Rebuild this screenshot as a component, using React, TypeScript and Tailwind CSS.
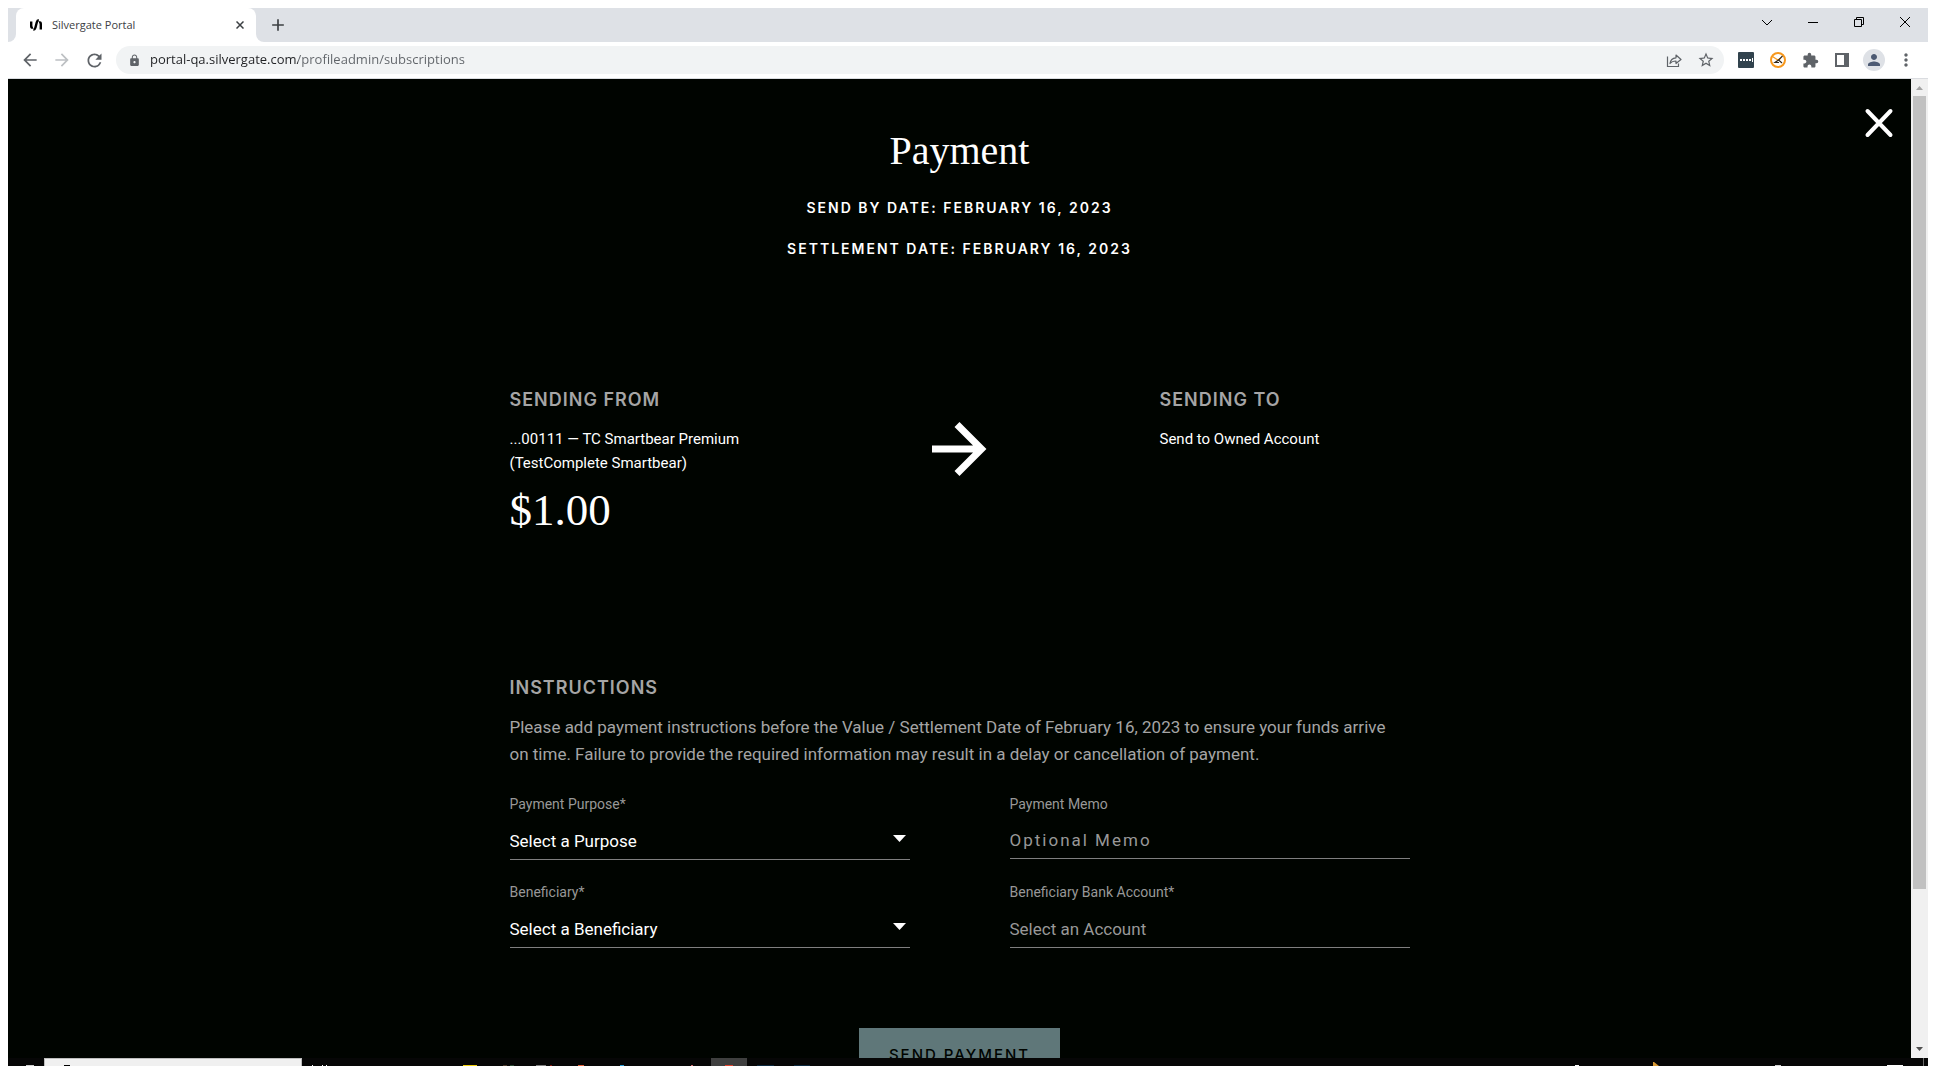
import type { ReactNode } from "react";
import {
  MdArrowBack,
  MdArrowForward,
  MdAdd,
  MdExtension,
  MdLock,
  MdMoreVert,
  MdPerson,
  MdRefresh,
  MdStarBorder,
} from "react-icons/md";

function TabStrip() {
  return (
    <div className="flex h-[34px] bg-[#dee1e6] pl-2 text-[#3c4043]">
      <div className="relative flex w-60 items-center rounded-t-lg bg-white pl-3.5 pr-2">
        <span className="absolute -left-2 bottom-0 size-2 overflow-hidden bg-white">
          <span className="block size-2 rounded-br-lg bg-[#dee1e6]" />
        </span>
        <span className="absolute -right-2 bottom-0 size-2 overflow-hidden bg-white">
          <span className="block size-2 rounded-bl-lg bg-[#dee1e6]" />
        </span>
        <svg className="size-3" viewBox="0 0 12 12" fill="none" stroke="#000" strokeWidth="2.4">
          <path d="M1.2 2.500v4.700q0 1.800 1.800 1.400M10.800 10.500V4.800q0-1.800-1.800-1.400" />
          <path d="M3.400 10.700q1.500 0 2-1.900L6.800 3.200q.5-1.900 2-1.900" />
        </svg>
        <span className="ml-2.5 flex-1 text-[11px]">Silvergate Portal</span>
        <button aria-label="Close tab" className="flex size-4 items-center justify-center">
          <svg className="size-2" viewBox="0 0 8 8" stroke="#3c4043" strokeWidth="1.500">
            <path d="M.5.5l7 7M7.500.5l-7 7" />
          </svg>
        </button>
      </div>
      <button aria-label="New tab" className="ml-3 self-center">
        <MdAdd size={20} />
      </button>
      <div className="ml-auto flex h-7 items-center text-black">
        <WindowButton label="Search tabs">
          <path d="M1 4l5 5 5-5" />
        </WindowButton>
        <WindowButton label="Minimize">
          <path d="M1 6.500h10" />
        </WindowButton>
        <WindowButton label="Restore">
          <path d="M1.500 3.500h7v7h-7zM3.500 3.500v-2h7v7h-2" />
        </WindowButton>
        <WindowButton label="Close window">
          <path d="M1 1l10 10M11 1L1 11" />
        </WindowButton>
      </div>
    </div>
  );
}

function WindowButton({ label, children }: { label: string; children: ReactNode }) {
  return (
    <button aria-label={label} className="flex h-7 w-[46px] items-center justify-center">
      <svg className="size-3" viewBox="0 0 12 12" fill="none" stroke="currentColor">
        {children}
      </svg>
    </button>
  );
}

function ToolButton({ label, children }: { label: string; children: ReactNode }) {
  return (
    <button aria-label={label} className="flex h-7 w-8 items-center justify-center">
      {children}
    </button>
  );
}

function Toolbar() {
  return (
    <div className="flex h-[37px] items-center border-b border-[#dadce0] bg-white pl-1.5 pr-1.5 text-[#5f6368]">
      <ToolButton label="Back">
        <MdArrowBack size={20} />
      </ToolButton>
      <ToolButton label="Forward">
        <MdArrowForward size={20} className="text-[#bdc0c3]" />
      </ToolButton>
      <ToolButton label="Reload">
        <MdRefresh size={21} />
      </ToolButton>
      <div className="ml-1.5 mr-1.5 flex h-7 flex-1 items-center rounded-full bg-[#f1f3f4] pl-3 pr-0.5">
        <MdLock size={13} />
        <input
          aria-label="Address"
          className="ml-[9px] flex-1 bg-linear-to-r from-[#202124] from-[148px] to-[#5f6368] to-[148px] bg-clip-text text-[13px] text-transparent outline-none"
          defaultValue="portal-qa.silvergate.com/profileadmin/subscriptions"
        />
        <ToolButton label="Share">
          <svg className="size-4" viewBox="0 0 16 16" fill="none" stroke="currentColor" strokeWidth="1.200">
            <path d="M1.500 4.500v10h11v-3" />
            <path d="M4 11.500C4.400 8 6.500 6 10 5.800V3l5 4.500-5 4V9C7.500 9 5.500 9.600 4 11.500z" strokeLinejoin="round" />
          </svg>
        </ToolButton>
        <ToolButton label="Bookmark">
          <MdStarBorder size={18} />
        </ToolButton>
      </div>
      <ToolButton label="Password extension">
        <svg className="size-4" viewBox="0 0 16 16">
          <rect width="16" height="16" rx="1" fill="#32434e" />
          <path d="M2 7h2v2H2zM5 7h2v2H5zM8 7h2v2H8zM11 7h2v2h-2zM14 6h1v4h-1z" fill="#fff" />
        </svg>
      </ToolButton>
      <ToolButton label="Recorder extension">
        <svg className="size-4" viewBox="0 0 16 16" fill="none">
          <circle cx="8" cy="8" r="7" fill="#fff" stroke="#f7981d" strokeWidth="2" />
          <path d="M2.500 4.500l3 2L8 8l2.500-1.500" stroke="#f7981d" strokeWidth="1.300" />
          <path d="M12.500 4L8.500 8l3.500 3M8.500 8L5 10.500h4" stroke="#33291c" strokeWidth="1.200" />
        </svg>
      </ToolButton>
      <ToolButton label="Extensions">
        <MdExtension size={17} />
      </ToolButton>
      <ToolButton label="Side panel">
        <svg className="size-3.5" viewBox="0 0 14 14" fill="currentColor">
          <path d="M0 0h14v14H0zM2 2v10h7V2z" fillRule="evenodd" />
        </svg>
      </ToolButton>
      <ToolButton label="Profile">
        <span className="flex size-[22px] items-center justify-center rounded-full bg-[#dee1e6] text-[#4c5a73]">
          <MdPerson size={18} />
        </span>
      </ToolButton>
      <ToolButton label="Menu">
        <MdMoreVert size={20} />
      </ToolButton>
    </div>
  );
}

function Heading({ children }: { children: ReactNode }) {
  return (
    <h2 className="font-[Inter,sans-serif] text-lg/6 font-semibold tracking-[1px] text-[#a5a5a5]">
      {children}
    </h2>
  );
}

function SelectField({ id, label, placeholder }: { id: string; label: string; placeholder: string }) {
  return (
    <div>
      <label htmlFor={id} className="block text-sm/5 text-[#989898]">
        {label}
      </label>
      <div className="relative mt-[9px]">
        <select
          id={id}
          className="block h-[37px] w-full appearance-none border-b border-[#7f7f7f] bg-transparent pt-0.5 text-[17px] text-white"
        >
          <option>{placeholder}</option>
        </select>
        <svg
          className="pointer-events-none absolute right-1 top-3 h-[7px] w-[13px]"
          viewBox="0 0 13 7"
          fill="#fff"
        >
          <path d="M0 0h13L6.500 7z" />
        </svg>
      </div>
    </div>
  );
}

function TextField(props: { id: string; label: string; placeholder: string; inputClass: string }) {
  return (
    <div>
      <label htmlFor={props.id} className="block text-sm/5 text-[#989898]">
        {props.label}
      </label>
      <input
        id={props.id}
        placeholder={props.placeholder}
        className={`mt-[9px] block w-full border-b border-[#7f7f7f] bg-transparent text-[17px] placeholder:text-[#989898] ${props.inputClass}`}
      />
    </div>
  );
}

function PaymentPage() {
  return (
    <main className="relative min-w-0 flex-1 overflow-hidden bg-[#000400] pt-12 font-[Roboto,sans-serif] text-white">
      <button aria-label="Close" className="absolute right-4 top-7">
        <svg className="size-8" viewBox="0 0 32 32" stroke="#fff" strokeWidth="4" strokeLinecap="round">
          <path d="M4.500 4l23 24M27.500 4l-23 24" />
        </svg>
      </button>
      <header className="text-center">
        <h1 className="font-['Liberation_Serif',serif] text-[40px]/[48px]">Payment</h1>
        <div className="mt-3 font-[Inter,sans-serif] text-sm/[41px] font-semibold tracking-[2px]">
          <p>SEND BY DATE: FEBRUARY 16, 2023</p>
          <p>SETTLEMENT DATE: FEBRUARY 16, 2023</p>
        </div>
      </header>
      <div className="mx-auto w-full max-w-[900px]">
        <section className="mt-[119px] grid grid-cols-[250px_1fr_250px] items-start">
          <div>
            <Heading>SENDING FROM</Heading>
            <p className="mt-[15px] text-[15px]/6">
              ...00111 — TC Smartbear Premium
              <br />
              (TestComplete Smartbear)
            </p>
            <p className="mt-2 font-['Liberation_Serif',serif] text-[45px]/[54px]">$1.00</p>
          </div>
          <svg
            className="mt-[34px] h-[54px] w-[55px] justify-self-center"
            viewBox="0 0 55 54"
            fill="none"
            stroke="#fff"
            strokeWidth="7"
          >
            <path d="M0 27h50M25 2.500L49.500 27 25 51.500" />
          </svg>
          <div>
            <Heading>SENDING TO</Heading>
            <p className="mt-[15px] text-[15px]/6">Send to Owned Account</p>
          </div>
        </section>
        <section className="mt-[139px]">
          <Heading>INSTRUCTIONS</Heading>
          <p className="mt-3.5 pr-2 text-[17px]/[27px] text-[#a5a5a5]">
            Please add payment instructions before the Value / Settlement Date of February 16, 2023 to
            ensure your funds arrive on time. Failure to provide the required information may result in a
            delay or cancellation of payment.
          </p>
          <form className="mt-[26px]">
            <div className="grid grid-cols-2 gap-x-[100px] gap-y-[22px]">
              <SelectField id="purpose" label="Payment Purpose*" placeholder="Select a Purpose" />
              <TextField
                id="memo"
                label="Payment Memo"
                placeholder="Optional Memo"
                inputClass="h-9 pb-0.5 tracking-[2px]"
              />
              <SelectField id="beneficiary" label="Beneficiary*" placeholder="Select a Beneficiary" />
              <TextField
                id="account"
                label="Beneficiary Bank Account*"
                placeholder="Select an Account"
                inputClass="h-[37px]"
              />
            </div>
            <button
              type="button"
              className="mx-auto mt-20 block bg-[#5f7779] px-[30px] py-[15px] font-[Inter,sans-serif] text-[15px]/6 font-medium tracking-[2px] text-[#000400]"
            >
              SEND PAYMENT
            </button>
          </form>
        </section>
      </div>
    </main>
  );
}

function Scrollbar() {
  return (
    <div className="flex w-[17px] flex-col items-center bg-[#f0f0f0]">
      <svg className="mb-1.5 mt-[7px] h-1 w-[7px]" viewBox="0 0 7 4" fill="#a3a3a3">
        <path d="M0 4L3.500 0 7 4z" />
      </svg>
      <div className="h-[81%] w-[13px] bg-[#c1c1c1]" />
      <svg className="mb-[7px] mt-auto h-1 w-[7px]" viewBox="0 0 7 4" fill="#505050">
        <path d="M0 0L3.500 4 7 0z" />
      </svg>
    </div>
  );
}

function Taskbar() {
  return (
    <footer className="flex h-2 items-end bg-[#060606]">
      <i className="ml-[18px] h-px w-2 bg-[#cfcfcf]" />
      <div className="ml-2.5 flex h-2 w-[258px] items-end border-x border-t border-[#bdbdbd] bg-[#f0f0f0]">
        <i className="ml-[19px] h-px w-1.5 bg-black" />
      </div>
      <i className="ml-2.5 size-px bg-white" />
      <i className="ml-[9px] size-px bg-white" />
      <i className="ml-[3px] size-px bg-white" />
      <i className="ml-[136px] h-px w-3.5 bg-[#f2cf0c]" />
      <i className="ml-[26px] h-px w-1 bg-[#4d3b2c]" />
      <i className="ml-[3px] h-px w-1 bg-[#2c4a34]" />
      <i className="ml-[22px] h-px w-2.5 bg-[#808080]" />
      <i className="ml-1 h-px w-0.5 bg-[#8a1a10]" />
      <i className="ml-[26px] h-px w-1.5 bg-[#e8623a]" />
      <i className="ml-9 h-px w-1 bg-[#2a9fd8]" />
      <i className="ml-[67px] h-px w-0.5 bg-[#d87070]" />
      <div className="ml-[18px] flex h-2 w-9 items-end justify-center bg-[#3f3f3f]">
        <i className="h-px w-2 bg-[#e2452f]" />
      </div>
      <i className="ml-2.5 h-px w-[17px] bg-[#0c2a40]" />
      <i className="ml-5 h-px w-4 bg-[#0c2a40]" />
      <i className="ml-auto h-px w-1 bg-white" />
      <svg className="ml-[74px] h-1 w-1.5" viewBox="0 0 6 4" fill="#d99a35">
        <path d="M0 0h1l5 4H0z" />
      </svg>
      <i className="ml-[116px] h-px w-1.5 bg-[#d0d0d0]" />
      <i className="ml-[106px] h-px w-4 bg-white" />
      <i className="ml-5 mr-1 h-2 w-px bg-[#6b6b6b]" />
    </footer>
  );
}

export default function App() {
  return (
    <div className="flex h-screen flex-col overflow-hidden bg-white px-2 pt-2 font-['Open_Sans',sans-serif]">
      <TabStrip />
      <Toolbar />
      <div className="flex min-h-0 flex-1">
        <PaymentPage />
        <Scrollbar />
      </div>
      <Taskbar />
    </div>
  );
}
